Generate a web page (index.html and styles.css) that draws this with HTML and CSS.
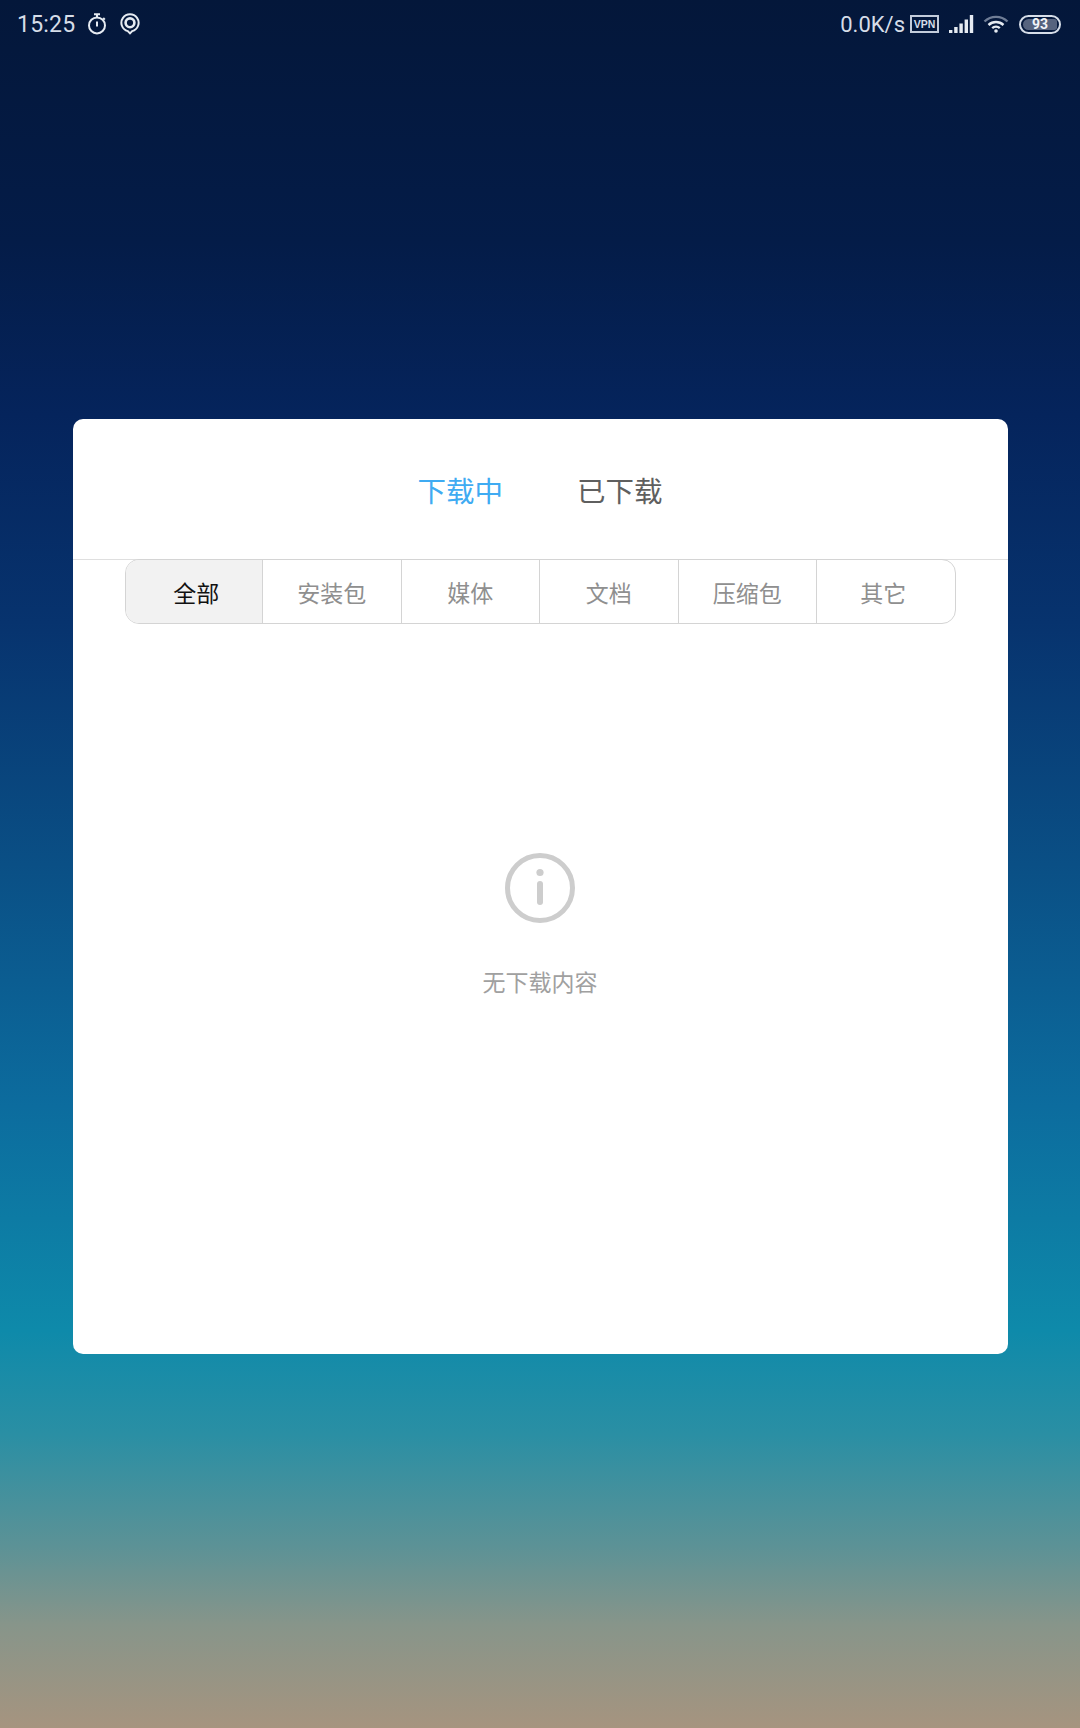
FILE: index.html
```html
<!DOCTYPE html>
<html lang="zh-CN">
<head>
<meta charset="utf-8">
<title>下载管理</title>
<link rel="stylesheet" href="styles.css">
</head>
<body>
<div class="screen">
  <header class="status">
    <div class="status-group">
      <span class="clock">15:25</span>
      <svg class="ic-timer" viewBox="0 0 20 22" aria-hidden="true">
        <path d="M7 1.2h6M10 1.2v3" />
        <circle cx="10" cy="12.4" r="8" />
        <path d="M10 8.4v5" />
        <path d="M16.2 5l1.6 1.6" />
      </svg>
      <svg class="ic-target" viewBox="0 0 20 22" aria-hidden="true">
        <path d="M7.8 18.1a8.6 8.6 0 1 1 4.4 0L10 20.4z" />
        <circle cx="10" cy="9.8" r="4.4" />
      </svg>
    </div>
    <div class="status-group status-right">
      <span class="speed">0.0K/s</span>
      <span class="vpn">VPN</span>
      <svg class="ic-signal" viewBox="0 0 25 18" aria-hidden="true">
        <rect x="0" y="15" width="3.4" height="3" />
        <rect x="5.2" y="12" width="3.4" height="6" />
        <rect x="10.4" y="8.5" width="3.4" height="9.5" />
        <rect x="15.6" y="4.5" width="3.4" height="13.5" />
        <rect x="20.8" y="0" width="3.4" height="18" />
      </svg>
      <svg class="ic-wifi" viewBox="0 0 26 18" aria-hidden="true">
        <path class="dim" d="M1.5 6.5a16.5 16.5 0 0 1 23 0" />
        <path d="M5.5 10a11 11 0 0 1 15 0" />
        <path d="M9.2 13.2a5.6 5.6 0 0 1 7.6 0" />
        <circle class="dot" cx="13" cy="16" r="1.8" />
      </svg>
      <span class="battery"><span class="battery-fill">93</span></span>
    </div>
  </header>

  <main class="dialog">
    <nav class="tabs">
      <span class="tab tab-active">下载中</span>
      <span class="tab">已下载</span>
    </nav>
    <div class="segments">
      <span class="segment segment-active">全部</span>
      <span class="segment">安装包</span>
      <span class="segment">媒体</span>
      <span class="segment">文档</span>
      <span class="segment">压缩包</span>
      <span class="segment segment-last">其它</span>
    </div>
    <section class="empty">
      <svg class="ic-info" viewBox="0 0 70 70" aria-hidden="true">
        <circle cx="35" cy="35" r="32.5" />
        <circle class="info-dot" cx="35" cy="19.5" r="3.6" />
        <rect class="info-bar" x="32" y="28" width="6" height="24" rx="3" />
      </svg>
      <p class="empty-text">无下载内容</p>
    </section>
  </main>
</div>
</body>
</html>
```
FILE: styles.css
```css
* { box-sizing: border-box; }

html, body {
  margin: 0;
  padding: 0;
}

body {
  font-family: "Roboto", "Noto Sans CJK SC", sans-serif;
}

.screen {
  width: 1080px;
  height: 1728px;
  display: flex;
  flex-direction: column;
  align-items: center;
  overflow: hidden;
  background: linear-gradient(180deg,
    #04173a 0%,
    #041c48 14%,
    #05245c 24%,
    #07336e 36%,
    #0a4f85 50%,
    #0c6c9e 64%,
    #0e8aaa 77%,
    #2a8fa4 83%,
    #5c9296 89.5%,
    #87958a 94%,
    #a6947f 100%);
}

/* Status bar */
.status {
  width: 100%;
  height: 46px;
  padding: 2px 19px 0 17px;
  display: flex;
  justify-content: space-between;
  align-items: center;
  color: #d6dde8;
}

.status-group {
  display: flex;
  align-items: center;
}

.clock {
  font-size: 23px;
  letter-spacing: 0.2px;
}

.ic-timer, .ic-target {
  width: 20px;
  height: 22px;
  fill: none;
  stroke: #e6ebf2;
  stroke-width: 2;
}

.ic-timer { margin-left: 12px; }
.ic-target { margin-left: 13px; }
.ic-target circle { stroke-width: 2.6; }

.speed { font-size: 22px; }

.vpn {
  margin-left: 5px;
  width: 29px;
  height: 18px;
  border: 2px solid #c3ccdb;
  font: 700 10.5px/14px "Liberation Sans", sans-serif;
  text-align: center;
}

.ic-signal {
  width: 25px;
  height: 18px;
  margin-left: 10px;
  fill: #e6ebf2;
}

.ic-wifi {
  width: 26px;
  height: 18px;
  margin-left: 9px;
  fill: none;
  stroke: #e6ebf2;
  stroke-width: 2.4;
}

.ic-wifi .dim { stroke: #6f7d96; }
.ic-wifi .dot { fill: #e6ebf2; stroke: none; }

.battery {
  margin-left: 10px;
  width: 42px;
  height: 19px;
  padding: 2px;
  border: 2px solid #d6dde8;
  border-radius: 10px;
  display: flex;
}

.battery-fill {
  flex: 1;
  background: #56637e;
  border-radius: 6px 3px 3px 6px;
  color: #f2f4f8;
  font: 700 14px/11px "Roboto", sans-serif;
  text-align: center;
}

/* Dialog */
.dialog {
  margin-top: 373px;
  width: 935px;
  height: 935px;
  background: #fff;
  border-radius: 10px;
  display: flex;
  flex-direction: column;
}

.tabs {
  height: 141px;
  flex: none;
  border-bottom: 1px solid #dfdfdf;
  display: flex;
  justify-content: center;
  align-items: center;
  gap: 74px;
  padding-top: 1px;
}

.tab {
  font-size: 28.5px;
  color: #5f5f5f;
}

.tab-active { color: #3fabf2; }

.segments {
  flex: none;
  align-self: center;
  width: 831px;
  height: 65px;
  margin-top: -1px;
  display: grid;
  grid-template-columns: 136.5px repeat(5, 1fr);
  border: 1px solid #d4d4d4;
  border-radius: 14px;
  overflow: hidden;
}

.segment {
  display: flex;
  align-items: center;
  justify-content: center;
  font-size: 23px;
  color: #8f8f8f;
  border-left: 1px solid #d4d4d4;
}

.segment:first-child { border-left: none; }

.segment-active {
  background: #f2f2f2;
  color: #111;
  padding-left: 5px;
}

.segment-last { padding-right: 5px; }

.empty {
  display: flex;
  flex-direction: column;
  align-items: center;
  margin-top: 229px;
}

.ic-info {
  width: 70px;
  height: 70px;
  fill: none;
  stroke: #cdcdcd;
  stroke-width: 5;
}

.info-dot, .info-bar {
  fill: #cdcdcd;
  stroke: none;
}

.empty-text {
  margin: 44px 0 0;
  font-size: 23px;
  line-height: 34px;
  color: #a0a0a0;
}
```
